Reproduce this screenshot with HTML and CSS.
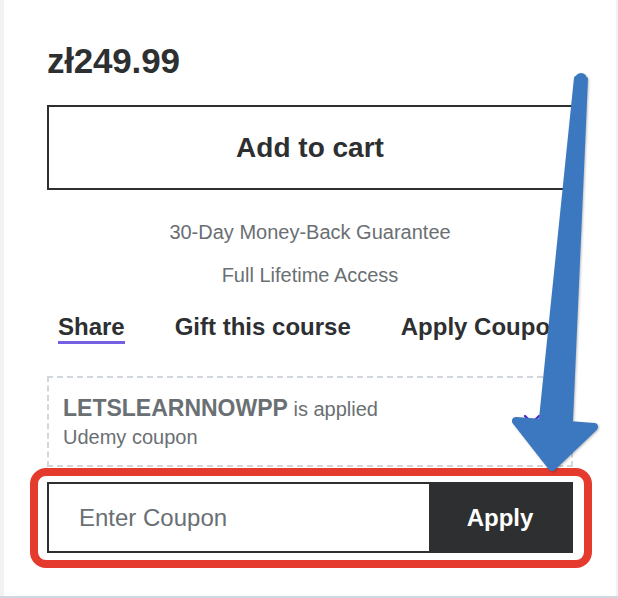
FILE: index.html
```html
<!DOCTYPE html>
<html lang="en">
<head>
<meta charset="utf-8">
<title>Course purchase</title>
<link rel="stylesheet" href="styles.css">
</head>
<body>
<div class="page">
  <div class="card">
    <div class="price">zł249.99</div>
    <button class="cart-btn" type="button">Add to cart</button>
    <p class="note note-first">30-Day Money-Back Guarantee</p>
    <p class="note">Full Lifetime Access</p>
    <nav class="tabs">
      <span class="tab tab-active">Share</span>
      <span class="tab">Gift this course</span>
      <span class="tab">Apply Coupon</span>
    </nav>
    <div class="applied">
      <div class="applied-text">
        <div class="applied-line"><strong class="code">LETSLEARNNOWPP</strong> is applied</div>
        <div class="applied-line">Udemy coupon</div>
      </div>
      <svg class="close-icon" viewBox="0 0 20 20" width="20" height="20" aria-hidden="true">
        <path d="M3 3 L17 17 M17 3 L3 17" fill="none" stroke="#5624d0" stroke-width="2.4" stroke-linecap="round"/>
      </svg>
    </div>
    <div class="highlight">
      <form class="coupon">
        <input class="coupon-input" type="text" placeholder="Enter Coupon">
        <button class="coupon-btn" type="button">Apply</button>
      </form>
    </div>
  </div>
  <svg class="arrow" viewBox="0 0 618 598" width="618" height="598" aria-hidden="true">
    <g fill="#3b78c0" stroke="#3b78c0" stroke-linejoin="round">
      <circle cx="581" cy="79" r="6" stroke="none"/>
      <polygon points="576,78 586,79 571,421 541,419" stroke-width="4"/>
      <polygon points="516,421 594,427 552,467" stroke-width="8"/>
    </g>
  </svg>
</div>
</body>
</html>
```
FILE: styles.css
```css
* { box-sizing: border-box; }

html, body {
  margin: 0;
  padding: 0;
}

body {
  background: #d1d7dc;
  width: 618px;
  height: 598px;
  overflow: hidden;
  font-family: "Liberation Sans", Arial, sans-serif;
  color: #2d2f31;
}

.page {
  position: relative;
  width: 618px;
  height: 596px;
  background: #f1f2f3;
  padding: 0 2px 0 4px;
}

.card {
  background: #ffffff;
  height: 596px;
  padding: 40px 43px 0 43px;
}

.price {
  font-size: 35px;
  font-weight: 700;
  line-height: 42px;
  letter-spacing: -0.2px;
}

.cart-btn {
  display: block;
  width: 100%;
  height: 85px;
  margin-top: 23px;
  background: #ffffff;
  border: 2px solid #2d2f31;
  font-family: inherit;
  font-size: 28px;
  font-weight: 700;
  color: #2d2f31;
  padding: 0;
}

.note {
  margin: 19px 0 0 0;
  text-align: center;
  font-size: 20px;
  line-height: 24px;
  color: #6a6f73;
}

.note-first { margin-top: 30px; }

.tabs {
  display: flex;
  gap: 50px;
  padding-left: 11px;
  margin-top: 26px;
  white-space: nowrap;
}

.tab {
  font-size: 24px;
  font-weight: 700;
  line-height: 28px;
  border-bottom: 3px solid transparent;
}

.tab-active { border-bottom-color: #7361e2; }

.applied {
  display: flex;
  align-items: center;
  justify-content: space-between;
  margin-top: 32px;
  border: 2px dashed #d1d7dc;
  padding: 16px 29px 14px 14px;
  color: #6a6f73;
}

.applied-line {
  font-size: 20px;
  line-height: 28px;
}

.code {
  font-size: 23px;
  font-weight: 700;
}

.close-icon { display: block; }

.highlight {
  margin: 1px -19px 0 -17px;
  border: 8px solid #e53b2f;
  border-radius: 16px;
  padding: 6px 11px 7px 9px;
}

.coupon {
  display: flex;
  height: 71px;
  margin: 0;
  border: 2px solid #2d2f31;
}

.coupon-input {
  flex: 1;
  min-width: 0;
  border: none;
  outline: none;
  padding: 0 0 0 30px;
  font-family: inherit;
  font-size: 24px;
  color: #2d2f31;
  background: #ffffff;
}

.coupon-input::placeholder { color: #6a6f73; }

.coupon-btn {
  width: 142px;
  border: none;
  background: #2d2f31;
  color: #ffffff;
  font-family: inherit;
  font-size: 24px;
  font-weight: 700;
  padding: 0;
}

.arrow {
  position: absolute;
  top: 0;
  left: 0;
  pointer-events: none;
  filter: drop-shadow(1px 1px 1px rgba(0, 0, 0, 0.25));
}
```
